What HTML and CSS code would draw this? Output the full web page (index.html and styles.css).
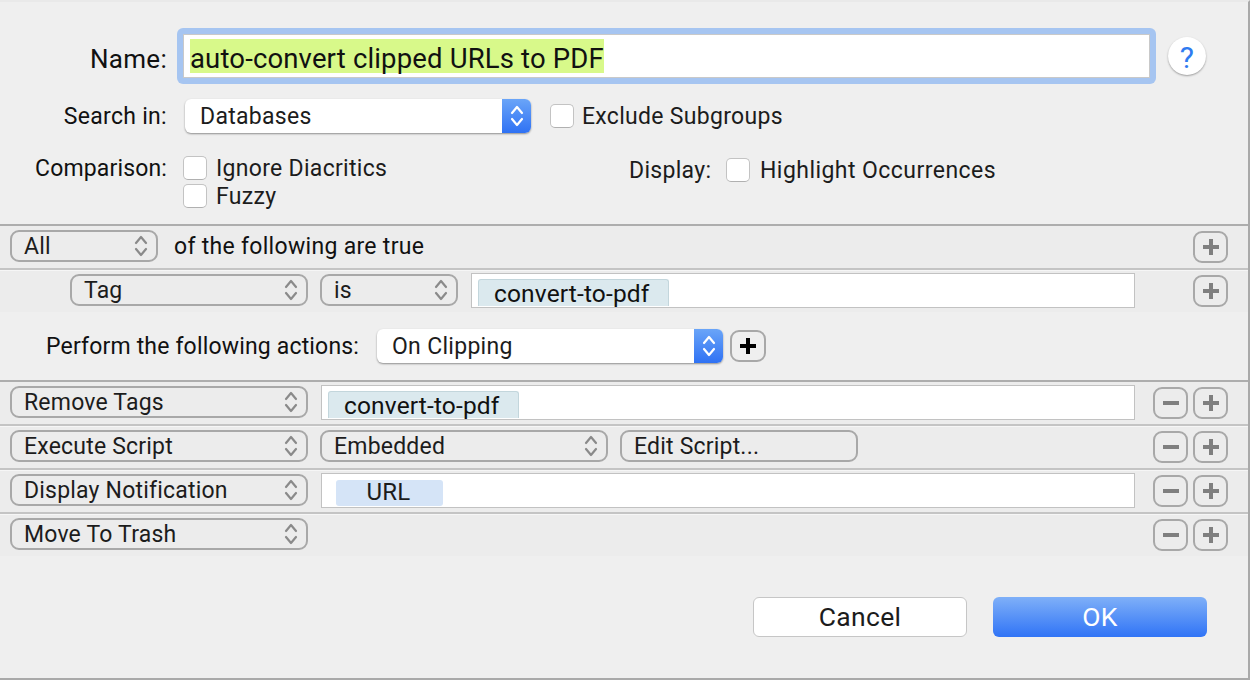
FILE: index.html
```html
<!DOCTYPE html>
<html>
<head>
  <title>Smart Rule</title>
  <link rel="stylesheet" href="styles.css">
</head>
<body>
  <svg class="defs" width="0" height="0">
    <symbol id="updown" viewBox="0 0 14 26">
      <path d="M2 10 L7 4 L12 10 M2 16 L7 22 L12 16" fill="none" stroke="currentColor" stroke-width="2.2" stroke-linecap="round" stroke-linejoin="round"/>
    </symbol>
    <symbol id="plus" viewBox="0 0 20 20">
      <path d="M8 2h4v6h6v4h-6v6H8v-6H2V8h6z" fill="currentColor"/>
    </symbol>
    <symbol id="minus" viewBox="0 0 20 20">
      <rect x="2" y="8" width="16" height="4" fill="currentColor"/>
    </symbol>
  </svg>

  <div class="dialog">
    <div class="head">
      <div class="name-row">
        <label class="lbl name-lbl">Name:</label>
        <div class="name-ring">
          <div class="name-input"><span class="hilite">auto-convert clipped URLs to PDF</span></div>
        </div>
        <div class="help">?</div>
      </div>

      <div class="search-row">
        <label class="lbl">Search in:</label>
        <div class="popup w346">
          <span>Databases</span>
          <span class="popup-arrow"><svg width="14" height="26"><use href="#updown"/></svg></span>
        </div>
        <div class="check ml19"></div>
        <span class="check-text tight">Exclude Subgroups</span>
      </div>

      <div class="compare-row">
        <label class="lbl">Comparison:</label>
        <div class="compare-opts">
          <div class="opt"><div class="check"></div><span class="check-text">Ignore Diacritics</span></div>
          <div class="opt"><div class="check"></div><span class="check-text">Fuzzy</span></div>
        </div>
        <div class="display-opt">
          <span class="display-lbl">Display:</span>
          <div class="check"></div>
          <span class="check-text wide">Highlight Occurrences</span>
        </div>
      </div>
    </div>

    <div class="rule first">
      <div class="pill w148"><span>All</span><svg class="pill-arrow" width="14" height="26"><use href="#updown"/></svg></div>
      <span class="rule-text">of the following are true</span>
      <div class="rule-btns">
        <div class="sq"><svg width="20" height="20"><use href="#plus"/></svg></div>
      </div>
    </div>
    <div class="rule light indent">
      <div class="pill w238"><span>Tag</span><svg class="pill-arrow" width="14" height="26"><use href="#updown"/></svg></div>
      <div class="pill w138"><span>is</span><svg class="pill-arrow" width="14" height="26"><use href="#updown"/></svg></div>
      <div class="field w664"><span class="token">convert-to-pdf</span></div>
      <div class="rule-btns">
        <div class="sq"><svg width="20" height="20"><use href="#plus"/></svg></div>
      </div>
    </div>

    <div class="perform">
      <span class="perform-lbl">Perform the following actions:</span>
      <div class="popup w346">
        <span>On Clipping</span>
        <span class="popup-arrow"><svg width="14" height="26"><use href="#updown"/></svg></span>
      </div>
      <div class="sq dark"><svg width="20" height="20"><use href="#plus"/></svg></div>
    </div>

    <div class="rule first">
      <div class="pill w298"><span>Remove Tags</span><svg class="pill-arrow" width="14" height="26"><use href="#updown"/></svg></div>
      <div class="field w814"><span class="token">convert-to-pdf</span></div>
      <div class="rule-btns">
        <div class="sq"><svg width="20" height="20"><use href="#minus"/></svg></div>
        <div class="sq"><svg width="20" height="20"><use href="#plus"/></svg></div>
      </div>
    </div>
    <div class="rule">
      <div class="pill w298"><span>Execute Script</span><svg class="pill-arrow" width="14" height="26"><use href="#updown"/></svg></div>
      <div class="pill w288"><span>Embedded</span><svg class="pill-arrow" width="14" height="26"><use href="#updown"/></svg></div>
      <div class="pill w238"><span>Edit Script...</span></div>
      <div class="rule-btns">
        <div class="sq"><svg width="20" height="20"><use href="#minus"/></svg></div>
        <div class="sq"><svg width="20" height="20"><use href="#plus"/></svg></div>
      </div>
    </div>
    <div class="rule">
      <div class="pill w298"><span>Display Notification</span><svg class="pill-arrow" width="14" height="26"><use href="#updown"/></svg></div>
      <div class="field w814"><span class="url-token">URL</span></div>
      <div class="rule-btns">
        <div class="sq"><svg width="20" height="20"><use href="#minus"/></svg></div>
        <div class="sq"><svg width="20" height="20"><use href="#plus"/></svg></div>
      </div>
    </div>
    <div class="rule">
      <div class="pill w298"><span>Move To Trash</span><svg class="pill-arrow" width="14" height="26"><use href="#updown"/></svg></div>
      <div class="rule-btns">
        <div class="sq"><svg width="20" height="20"><use href="#minus"/></svg></div>
        <div class="sq"><svg width="20" height="20"><use href="#plus"/></svg></div>
      </div>
    </div>

    <div class="footer">
      <button class="btn">Cancel</button>
      <button class="btn ok">OK</button>
    </div>
  </div>
</body>
</html>
```

FILE: styles.css
```css
html, body {
  margin: 0;
  padding: 0;
}
body {
  width: 1250px;
  height: 680px;
  overflow: hidden;
  font-family: Roboto, "Liberation Sans", sans-serif;
  font-size: 23px;
  letter-spacing: 0.3px;
  color: #1c1c1c;
  background: #efefef;
}
.defs {
  display: block;
  height: 0;
}
.dialog {
  box-sizing: border-box;
  width: 1250px;
  height: 680px;
  border-top: 2px solid #e9e9e9;
  border-right: 2px solid #a9a9a9;
  border-bottom: 2px solid #a9a9a9;
  background: #efefef;
}

/* top form */
.head {
  height: 222px;
}
.lbl {
  width: 167px;
  flex: none;
  text-align: right;
  color: #111;
}
.name-row {
  display: flex;
  align-items: center;
  height: 56px;
  padding-top: 26px;
}
.name-lbl {
  padding-top: 5px;
  font-size: 26px;
}
.name-ring {
  box-sizing: border-box;
  width: 979px;
  height: 56px;
  margin-left: 10px;
  padding: 6px;
  border-radius: 6px;
  background: #a6c5f1;
}
.name-input {
  box-sizing: border-box;
  height: 44px;
  padding: 4px 0 0 6px;
  border: 1px solid #c9c9c9;
  background: #fff;
}
.hilite {
  display: inline-block;
  height: 34px;
  line-height: 40px;
  font-size: 27.5px;
  letter-spacing: 0.15px;
  color: #111;
  background: #d8f98a;
}
.help {
  width: 38px;
  height: 38px;
  margin-left: 12px;
  border-radius: 50%;
  background: #fff;
  box-shadow: 0 1px 2px rgba(0, 0, 0, 0.35);
  color: #2f7bf0;
  font-size: 30px;
  line-height: 41px;
  text-align: center;
}
.search-row {
  display: flex;
  align-items: center;
  height: 34px;
  margin-top: 15px;
}
.popup {
  box-sizing: border-box;
  display: flex;
  align-items: center;
  justify-content: space-between;
  height: 34px;
  padding-left: 15px;
  border-radius: 6px;
  background: #fff;
  box-shadow: 0 1px 2px rgba(0, 0, 0, 0.4);
}
.search-row .popup {
  margin-left: 18px;
}
.popup-arrow {
  display: flex;
  align-items: center;
  justify-content: center;
  width: 29px;
  height: 34px;
  border-radius: 0 6px 6px 0;
  color: #fff;
  background: linear-gradient(#6aa5f8, #2f72f4);
}
.w346 {
  width: 346px;
}
.check {
  box-sizing: border-box;
  flex: none;
  width: 24px;
  height: 24px;
  border: 1px solid #c3c3c3;
  border-bottom-color: #b0b0b0;
  border-radius: 5px;
  background: #fff;
}
.ml19 {
  margin-left: 19px;
}
.check-text {
  margin-left: 10px;
}
.check-text.tight {
  margin-left: 8px;
}
.check-text.wide {
  letter-spacing: 0.45px;
}
.compare-row {
  display: flex;
  margin-top: 23px;
}
.compare-row .lbl {
  line-height: 26px;
  letter-spacing: 0.15px;
}
.compare-opts {
  width: 446px;
  margin-left: 16px;
}
.compare-opts .check-text {
  margin-left: 9px;
}
.opt {
  display: flex;
  align-items: center;
  height: 24px;
  margin-bottom: 4px;
}
.display-opt {
  display: flex;
  align-items: center;
  height: 24px;
  margin-top: 2px;
}
.display-lbl {
  width: 82px;
  margin-right: 15px;
}

/* rule rows */
.rule {
  display: flex;
  align-items: center;
  box-sizing: border-box;
  height: 44px;
  padding: 0 20px 2px 10px;
  gap: 12px;
  border-top: 2px solid #c4c4c4;
  box-shadow: inset 0 1px 0 #f6f6f6;
  background: #ececec;
}
.rule.first {
  border-top-color: #adadad;
  box-shadow: none;
}
.indent {
  padding-left: 70px;
}
.pill {
  box-sizing: border-box;
  position: relative;
  display: flex;
  align-items: center;
  flex: none;
  height: 32px;
  padding-left: 12px;
  border: 2px solid #a8a8a8;
  border-radius: 9px;
  letter-spacing: 0.2px;
}
.pill-arrow {
  position: absolute;
  right: 8px;
  top: 1px;
  color: #8a8a8a;
}
.w148 { width: 148px; }
.w238 { width: 238px; }
.w138 { width: 138px; }
.w298 { width: 298px; }
.w288 { width: 288px; }
.rule-text {
  margin-left: 4px;
  color: #111;
}
.rule-btns {
  display: flex;
  gap: 5px;
  margin-left: auto;
  padding-top: 2px;
}
.sq {
  box-sizing: border-box;
  display: flex;
  align-items: center;
  justify-content: center;
  width: 35px;
  height: 32px;
  border: 2px solid #a8a8a8;
  border-radius: 9px;
  color: #7f7f7f;
}
.sq.dark {
  color: #000;
}
.field {
  box-sizing: border-box;
  flex: none;
  height: 35px;
  margin-left: 1px;
  overflow: hidden;
  border: 1px solid #c2c2c2;
  background: #fff;
}
.w664 { width: 664px; }
.w814 { width: 814px; }
.token {
  display: block;
  box-sizing: border-box;
  width: 191px;
  height: 27px;
  margin: 5px 0 0 6px;
  padding-left: 15px;
  font-size: 24.5px;
  letter-spacing: 0.15px;
  line-height: 27px;
  border: 1px solid #c3d6dc;
  border-bottom: 0;
  border-radius: 3px 3px 0 0;
  background: #dbe9ee;
  color: #111;
}
.url-token {
  display: block;
  box-sizing: border-box;
  width: 107px;
  height: 26px;
  margin: 6px 0 0 14px;
  padding-right: 2px;
  border-radius: 3px;
  font-size: 24px;
  line-height: 24px;
  text-align: center;
  background: #d5e4f7;
}

/* actions header */
.perform {
  display: flex;
  align-items: center;
  height: 68px;
  padding-left: 46px;
}
.perform-lbl {
  width: 331px;
  letter-spacing: 0.17px;
  color: #111;
}
.perform .sq {
  width: 36px;
  margin-left: 7px;
}

/* buttons */
.footer {
  display: flex;
  justify-content: flex-end;
  gap: 26px;
  margin-top: 41px;
  padding-right: 41px;
}
.btn {
  width: 214px;
  height: 40px;
  padding: 0 0 2px;
  border: 1px solid #c6c6c6;
  border-radius: 6px;
  font-family: inherit;
  font-size: 26.5px;
  letter-spacing: 0.3px;
  color: #1c1c1c;
  background: #fff;
}
.btn.ok {
  border: 0;
  color: #fff;
  background: linear-gradient(#7fb0f8, #3074f6);
}
```
